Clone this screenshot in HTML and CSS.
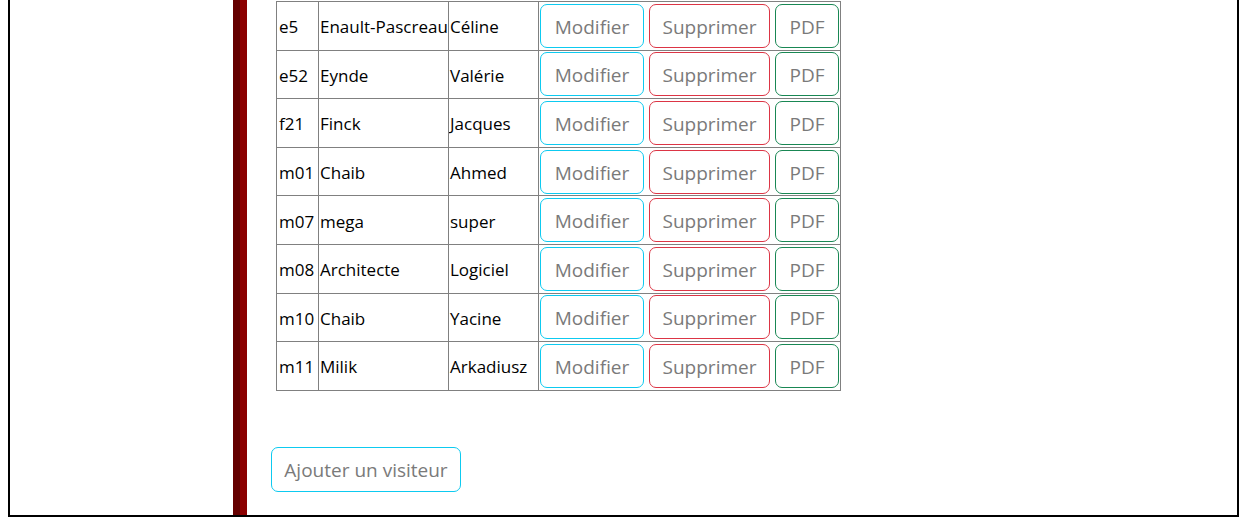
FILE: index.html
```html
<!DOCTYPE html>
<html lang="fr">
<head>
<meta charset="utf-8">
<title>Visiteurs</title>
<link rel="stylesheet" href="styles.css">
</head>
<body>
<div class="frame">
  <div class="sidebar"></div>
  <main class="main">
    <table class="visitors">
      <colgroup>
        <col class="c-id"><col class="c-nom"><col class="c-prenom"><col class="c-actions">
      </colgroup>
      <tbody>
        <tr><td>e5</td><td>Enault-Pascreau</td><td>Céline</td><td><div class="actions"><button class="btn btn-edit">Modifier</button><button class="btn btn-del">Supprimer</button><button class="btn btn-pdf">PDF</button></div></td></tr>
        <tr><td>e52</td><td>Eynde</td><td>Valérie</td><td><div class="actions"><button class="btn btn-edit">Modifier</button><button class="btn btn-del">Supprimer</button><button class="btn btn-pdf">PDF</button></div></td></tr>
        <tr><td>f21</td><td>Finck</td><td>Jacques</td><td><div class="actions"><button class="btn btn-edit">Modifier</button><button class="btn btn-del">Supprimer</button><button class="btn btn-pdf">PDF</button></div></td></tr>
        <tr><td>m01</td><td>Chaib</td><td>Ahmed</td><td><div class="actions"><button class="btn btn-edit">Modifier</button><button class="btn btn-del">Supprimer</button><button class="btn btn-pdf">PDF</button></div></td></tr>
        <tr><td>m07</td><td>mega</td><td>super</td><td><div class="actions"><button class="btn btn-edit">Modifier</button><button class="btn btn-del">Supprimer</button><button class="btn btn-pdf">PDF</button></div></td></tr>
        <tr><td>m08</td><td>Architecte</td><td>Logiciel</td><td><div class="actions"><button class="btn btn-edit">Modifier</button><button class="btn btn-del">Supprimer</button><button class="btn btn-pdf">PDF</button></div></td></tr>
        <tr><td>m10</td><td>Chaib</td><td>Yacine</td><td><div class="actions"><button class="btn btn-edit">Modifier</button><button class="btn btn-del">Supprimer</button><button class="btn btn-pdf">PDF</button></div></td></tr>
        <tr><td>m11</td><td>Milik</td><td>Arkadiusz</td><td><div class="actions"><button class="btn btn-edit">Modifier</button><button class="btn btn-del">Supprimer</button><button class="btn btn-pdf">PDF</button></div></td></tr>
      </tbody>
    </table>
    <button class="btn btn-add">Ajouter un visiteur</button>
  </main>
</div>
</body>
</html>
```
FILE: styles.css
```css
html, body {
  margin: 0;
  padding: 0;
  background: #fff;
}
body {
  padding-left: 8px;
  font-family: "Open Sans", "Noto Sans", "Liberation Sans", sans-serif;
  color: #000;
}
.frame {
  box-sizing: border-box;
  width: 1231px;
  height: 517px;
  border: 2px solid #000;
  border-top: none;
  display: flex;
}
.sidebar {
  width: 223px;
  flex: none;
}
.main {
  flex: 1;
  border-left: 7px solid #650000;
  box-shadow: inset 7px 0 0 #8b0000;
  padding: 0 0 0 31px;
  display: flex;
  flex-direction: column;
  align-items: flex-start;
}
.visitors {
  border-collapse: collapse;
  table-layout: fixed;
  width: 565px;
  margin: 1px 0 0 5px;
  font-size: 17px;
  border: 1px solid #808080;
}
.c-id { width: 42px; }
.c-nom { width: 130px; }
.c-prenom { width: 90px; }
.c-actions { width: 302px; }
.visitors td {
  border: 1px solid #808080;
  padding: 2px 0 0 1px;
  height: 45.6px;
  vertical-align: middle;
  white-space: nowrap;
  overflow: hidden;
}
.visitors td:first-child { padding-left: 2px; }
.visitors td:last-child { padding: 1px 0 1px 1px; }
.actions {
  display: flex;
  gap: 5px;
}
.btn {
  box-sizing: border-box;
  background: #fff;
  font-family: inherit;
  font-size: 19px;
  color: #7a7a7a;
  border: 1px solid;
  border-radius: 7px;
  height: 44px;
  padding: 2px 0 0;
  text-align: center;
}
.btn-edit { border-color: #0dcaf0; width: 104px; }
.btn-del { border-color: #dc3545; width: 121px; }
.btn-pdf { border-color: #198754; width: 64px; }
.btn-add {
  border-color: #0dcaf0;
  width: 190px;
  height: 45px;
  margin-top: 56px;
}
```
